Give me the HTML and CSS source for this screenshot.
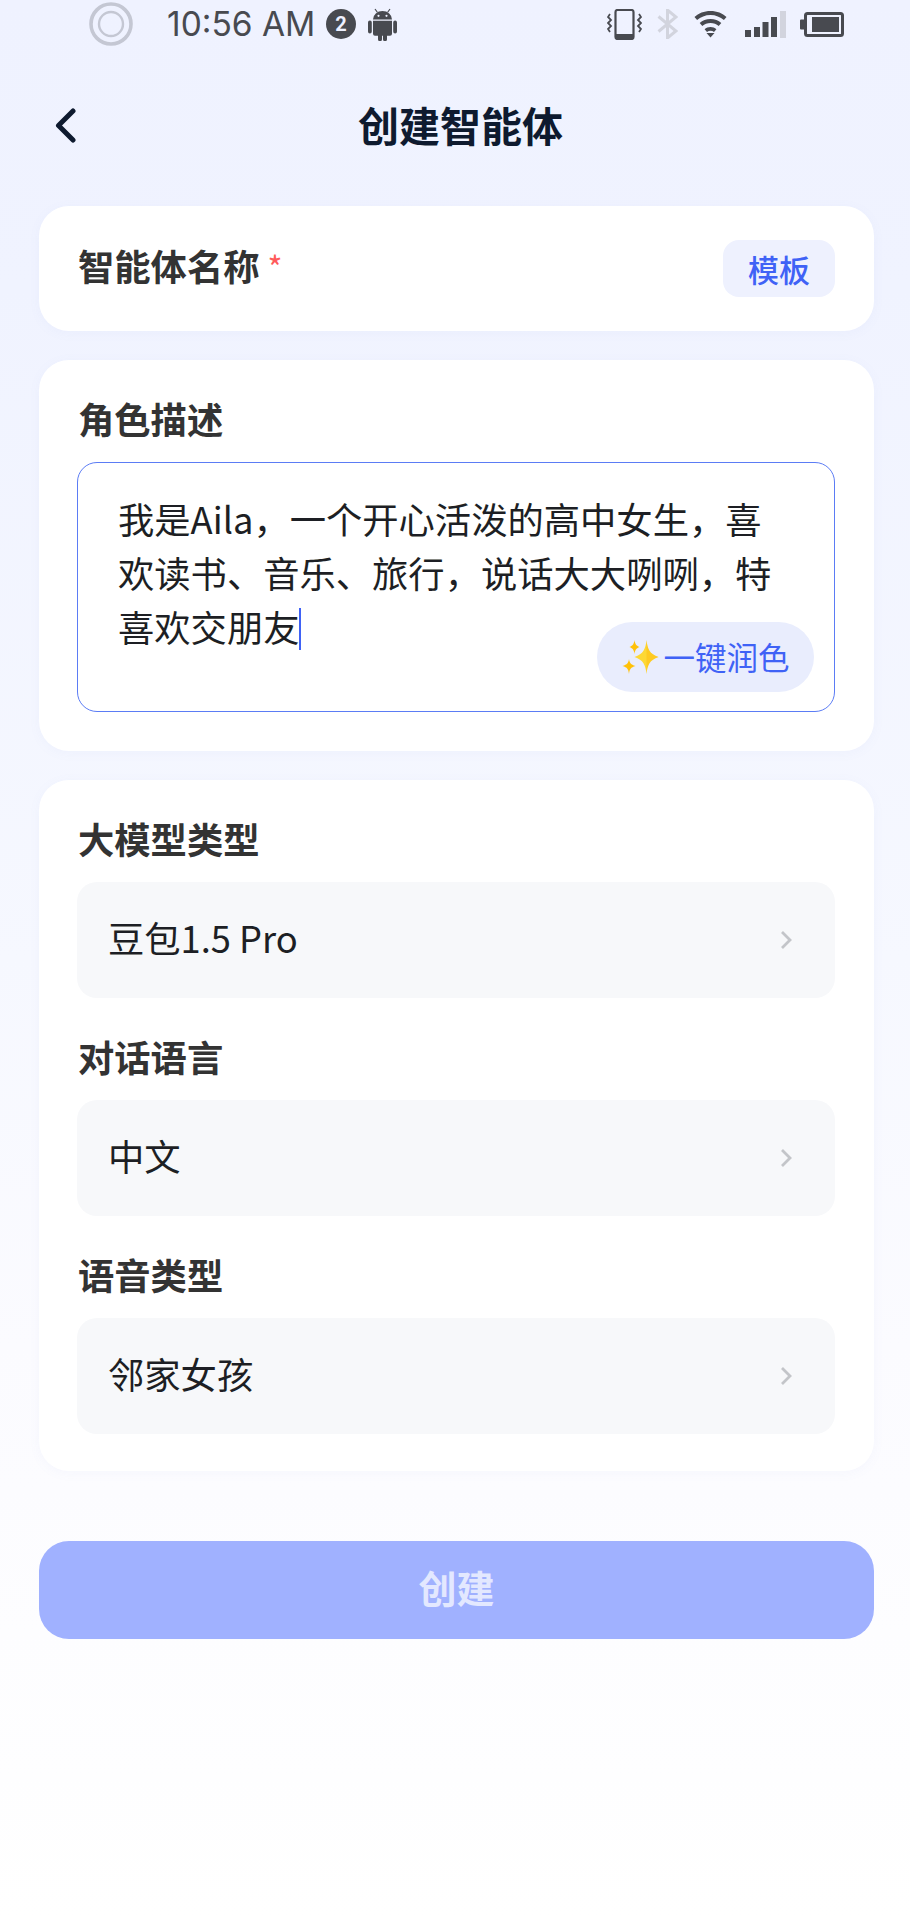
FILE: index.html
```html
<!DOCTYPE html>
<html lang="zh-CN">
<head>
<meta charset="utf-8">
<title>创建智能体</title>
<link rel="stylesheet" href="styles.css">
</head>
<body>
<div class="page">
  <div class="statusbar">
    <svg class="ic-record" viewBox="0 0 44 44"><circle cx="22" cy="22" r="20" fill="none" stroke="#c4c7d3" stroke-width="3.6"/><circle cx="22" cy="22" r="12" fill="none" stroke="#c4c7d3" stroke-width="2.4"/></svg>
    <span class="time">10:56 AM</span>
    <span class="badge">2</span>
    <svg class="ic-android" viewBox="0 0 29 33"><path fill="#484a50" d="M5 11.5a9.5 8.5 0 0 1 19 0zM5 12.8h19v13a2 2 0 0 1-2 2h-3v3.5a2 2 0 0 1-4 0v-3.500h-1v3.500a2 2 0 0 1-4 0v-3.500H7a2 2 0 0 1-2-2zM0 14.500a1.900 1.900 0 0 1 3.800 0v9a1.900 1.900 0 0 1-3.800 0zM25.200 14.500a1.900 1.900 0 0 1 3.800 0v9a1.900 1.900 0 0 1-3.800 0z"/><path stroke="#484a50" stroke-width="1.200" d="M9.500 4.500 7 1M19.500 4.500 22 1"/><circle cx="10.500" cy="7.800" r="1.100" fill="#eef1ff"/><circle cx="18.500" cy="7.800" r="1.100" fill="#eef1ff"/></svg>
    <div class="status-right">
      <svg class="ic-vib" viewBox="0 0 35 31"><rect x="8.500" y="1" width="18" height="29" rx="2" fill="none" stroke="#484a50" stroke-width="2.200"/><rect x="8" y="25" width="19" height="5" fill="#484a50"/><path d="M3 5 1 8l3 3-3 3 3 3-3 3 2 3M32 5l2 3-3 3 3 3-3 3 3 3-2 3" fill="none" stroke="#484a50" stroke-width="1.800"/></svg>
      <svg class="ic-bt" viewBox="0 0 21 30"><path d="M1.500 7.500 19 22l-8.500 7V1L19 8 1.500 22.500" fill="none" stroke="#d2d4de" stroke-width="3"/></svg>
      <svg class="ic-wifi" viewBox="0 0 33 28"><path fill="#484a50" d="M16.500 1C10 1 4.500 3.300.5 7l2.600 3c3.500-3 8.200-5 13.400-5s9.900 2 13.400 5l2.600-3C28.500 3.300 23 1 16.500 1zM16.500 9c-4.300 0-8 1.500-10.800 4l2.600 3c2.200-1.900 5-3 8.200-3s6 1.100 8.200 3l2.600-3c-2.800-2.500-6.500-4-10.800-4zM16.500 17c-2.300 0-4.300.8-5.900 2.200l2.400 2.800c1-.8 2.200-1.200 3.500-1.200s2.500.4 3.500 1.200l2.400-2.800C20.800 17.800 18.800 17 16.500 17zM12.500 23l4 4.500 4-4.500z" /></svg>
      <svg class="ic-signal" viewBox="0 0 41 27"><rect x="0" y="19" width="6" height="7" fill="#484a50"/><rect x="9" y="16" width="6" height="10" fill="#484a50"/><rect x="17.500" y="11" width="6" height="15" fill="#484a50"/><rect x="26" y="6" width="6" height="20" fill="#484a50"/><rect x="35" y="0" width="6" height="27" fill="#d2d4de"/></svg>
      <svg class="ic-batt" viewBox="0 0 44 25"><path d="M0 8.500a1 1 0 0 1 1-1h3v10H1a1 1 0 0 1-1-1z" fill="#484a50"/><rect x="5.500" y="1.500" width="37" height="22" rx="2" fill="none" stroke="#484a50" stroke-width="3"/><rect x="12" y="5" width="27" height="15" fill="#484a50"/></svg>
    </div>
  </div>

  <header class="topbar">
    <svg class="back" viewBox="0 0 21 35"><path d="M18 3 3.500 17.500 18 32" fill="none" stroke="#0e1a2f" stroke-width="5" stroke-linecap="round" stroke-linejoin="round"/></svg>
    <h1 class="title">创建智能体</h1>
  </header>

  <main class="content">
    <section class="card card-name">
      <div class="label">智能体名称<span class="req">*</span></div>
      <button class="tpl">模板</button>
    </section>

    <section class="card">
      <div class="label">角色描述</div>
      <div class="textbox">
        <p class="desc">我是Aila，一个开心活泼的高中女生，喜欢读书、音乐、旅行，说话大大咧咧，特喜欢交朋友<span class="caret"></span></p>
        <button class="polish">
          <svg class="spark" viewBox="0 0 38 36"><path fill="#fdd835" d="M25 1c1 9 3 14 12 17-9 3-11 8-12 17-1-9-3-14-12-17 9-3 11-8 12-17z"/><path fill="#ffb300" d="M25 1c1 9 3 14 12 17-9 3-11 8-12 17z" opacity=".35"/><path fill="#ffc107" d="M13 1c.600 4 1.500 5.500 5 7-3.500 1.500-4.400 3-5 7-.6-4-1.500-5.500-5-7 3.500-1.500 4.400-3 5-7zM7.500 20c.6 4 1.700 5.500 6.500 7-4.800 1.500-5.900 3-6.500 8-.6-5-1.700-6.500-6.500-8 4.800-1.500 5.900-3 6.500-7z"/></svg>
          <span>一键润色</span>
        </button>
      </div>
    </section>

    <section class="card card-form">
      <div class="field">
        <div class="label">大模型类型</div>
        <div class="select"><span>豆包1.5 Pro</span><svg class="chev" viewBox="0 0 12 20"><path d="M2 2l8 8-8 8" fill="none" stroke="#c3c5c9" stroke-width="2.800"/></svg></div>
      </div>
      <div class="field">
        <div class="label">对话语言</div>
        <div class="select"><span>中文</span><svg class="chev" viewBox="0 0 12 20"><path d="M2 2l8 8-8 8" fill="none" stroke="#c3c5c9" stroke-width="2.800"/></svg></div>
      </div>
      <div class="field">
        <div class="label">语音类型</div>
        <div class="select"><span>邻家女孩</span><svg class="chev" viewBox="0 0 12 20"><path d="M2 2l8 8-8 8" fill="none" stroke="#c3c5c9" stroke-width="2.800"/></svg></div>
      </div>
    </section>

    <button class="submit">创建</button>
  </main>
</div>
</body>
</html>
```

FILE: styles.css
```css
* { box-sizing: border-box; margin: 0; padding: 0; }
html, body { height: 100%; }
body {
  font-family: "Noto Sans CJK SC", "Noto Sans", sans-serif;
  background: #fff;
}
button { font-family: inherit; border: 0; }
.page {
  width: 910px;
  height: 1920px;
  overflow: hidden;
  background: linear-gradient(180deg, #eff2ff 0%, #f0f3ff 15%, #f6f8ff 50%, #fbfbff 70%, #ffffff 100%);
}

.statusbar {
  height: 46px;
  display: flex;
  align-items: center;
  padding: 2px 66px 0 89px;
}
.ic-record { width: 44px; height: 44px; margin-right: 34px; }
.time { font-family: Inter, sans-serif; font-size: 33.500px; line-height: 40px; color: #484a50; width: 145px; white-space: nowrap; }
.badge {
  width: 30px; height: 30px; margin-left: 14px; border-radius: 50%;
  background: #484a50; color: #eef1ff;
  font: 700 20px/30px Roboto, sans-serif; text-align: center;
}
.ic-android { width: 29px; height: 33px; margin-left: 12px; }
.status-right { margin-left: auto; display: flex; align-items: center; }
.ic-vib { width: 35px; height: 31px; }
.ic-bt { width: 21px; height: 30px; margin-left: 15px; }
.ic-wifi { width: 33px; height: 28px; margin-left: 16px; }
.ic-signal { width: 41px; height: 27px; margin-left: 18px; }
.ic-batt { width: 44px; height: 25px; margin-left: 14px; }

.topbar {
  height: 160px;
  position: relative;
  display: flex;
  align-items: center;
  justify-content: center;
}
.back { position: absolute; left: 55px; top: 62px; width: 21px; height: 35px; }
.title { font-size: 41px; line-height: 56px; font-weight: 700; color: #0e1a2f; padding: 0 0 5px 11px; }

.content {
  padding: 0 36px 0 39px;
  display: flex;
  flex-direction: column;
  gap: 29px;
}
.card {
  background: #fff;
  border-radius: 30px;
  padding: 31px 39px 39px 38px;
  box-shadow: 0 2px 12px rgba(120, 135, 220, 0.05);
}
.card-form { padding-bottom: 37px; }
.card-name {
  height: 125px;
  padding: 0 39px;
  display: flex;
  align-items: center;
  justify-content: space-between;
}
.label { font-size: 36.300px; line-height: 54px; font-weight: 700; color: #333; padding-left: 1px; }
.card-name .label { padding: 0 0 5px; }
.req { color: #ff5a5a; font-weight: 400; margin-left: 8px; font-size: 32px; position: relative; top: -1px; }
.tpl {
  width: 112px; height: 57px; border-radius: 16px;
  background: #eef1fe; color: #3f62f6;
  font-size: 31px; line-height: 55px; font-weight: 500;
}

.textbox {
  position: relative;
  height: 250px;
  margin-top: 17px;
  border: 1.500px solid #5b7cf5;
  border-radius: 20px;
  padding: 28px 40px 0 40px;
}
.desc { font-size: 36.300px; line-height: 54px; color: #1d1f24; word-break: break-all; }
.caret { display: inline-block; width: 2px; height: 42px; background: #3f62f6; vertical-align: -8px; }
.polish {
  position: absolute; right: 20px; bottom: 19px;
  width: 217px; height: 70px; border-radius: 35px;
  background: #e9edfd; color: #3f62f6;
  font-size: 31.500px;
  display: flex; align-items: center; justify-content: center; gap: 3px;
}
.polish span { padding-bottom: 3px; }
.spark { width: 39px; height: 36px; }

.field + .field { margin-top: 31px; }
.select {
  height: 116px;
  margin-top: 17px;
  background: #f7f8fa;
  border-radius: 20px;
  padding: 0 43px 0 31px;
  display: flex;
  align-items: center;
  justify-content: space-between;
  font-size: 36.300px;
  color: #1d1f24;
}
.select span { padding-bottom: 6px; }
.chev { width: 12px; height: 20px; }

.submit {
  margin-top: 41px;
  height: 98px;
  border-radius: 30px;
  background: #a0b1ff;
  color: #e3e8ff;
  font-size: 38px;
  font-weight: 700;
  padding-bottom: 7px;
}
```
